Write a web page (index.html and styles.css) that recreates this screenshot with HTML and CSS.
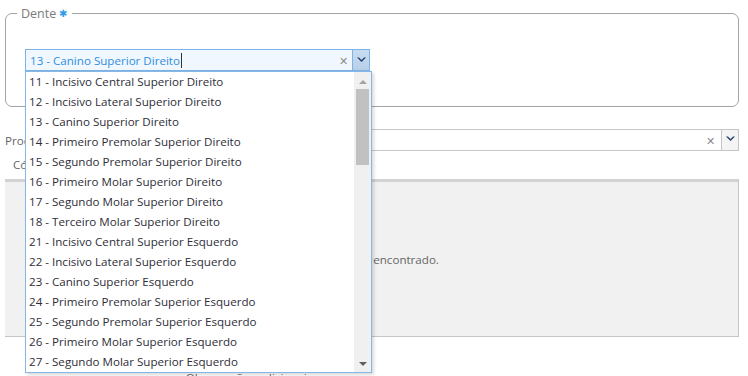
FILE: index.html
```html
<!DOCTYPE html>
<html lang="pt">
<head>
    <meta charset="UTF-8">
    <title>Dente</title>
    <link rel="stylesheet" href="styles.css">
</head>
<body>
    <fieldset class="tooth-box">
        <legend>Dente <span class="req">&#x2731;</span></legend>
        <div class="combo combo-open">
            <div class="combo-input">
                <span class="combo-text">13 - Canino Superior Direito</span><span class="caret"></span>
                <span class="combo-clear">&#x2715;</span>
            </div>
            <div class="combo-btn"><svg width="9" height="6" viewBox="0 0 9 6"><path d="M0 0.5 L4.5 5 L9 0.5 L7 0.5 L4.5 3 L2 0.5 Z" fill="#24406e"/></svg></div>

            <div class="combo-list">
                <ul class="options">
                    <li>11 - Incisivo Central Superior Direito</li>
                    <li>12 - Incisivo Lateral Superior Direito</li>
                    <li>13 - Canino Superior Direito</li>
                    <li>14 - Primeiro Premolar Superior Direito</li>
                    <li>15 - Segundo Premolar Superior Direito</li>
                    <li>16 - Primeiro Molar Superior Direito</li>
                    <li>17 - Segundo Molar Superior Direito</li>
                    <li>18 - Terceiro Molar Superior Direito</li>
                    <li>21 - Incisivo Central Superior Esquerdo</li>
                    <li>22 - Incisivo Lateral Superior Esquerdo</li>
                    <li>23 - Canino Superior Esquerdo</li>
                    <li>24 - Primeiro Premolar Superior Esquerdo</li>
                    <li>25 - Segundo Premolar Superior Esquerdo</li>
                    <li>26 - Primeiro Molar Superior Esquerdo</li>
                    <li>27 - Segundo Molar Superior Esquerdo</li>
                </ul>
                <div class="scrollbar">
                    <span class="sb-up"></span>
                    <span class="sb-thumb"></span>
                    <span class="sb-down"></span>
                </div>
            </div>
        </div>
    </fieldset>

    <div class="proc-row">
        <label class="proc-label">Procedimento</label>
        <div class="combo-plain">
            <span class="combo-clear">&#x2715;</span>
            <div class="plain-btn"><svg width="9" height="6" viewBox="0 0 9 6"><path d="M0 0.5 L4.5 5 L9 0.5 L7 0.5 L4.5 3 L2 0.5 Z" fill="#24406e"/></svg></div>
        </div>
    </div>

    <div class="tabs">
        <span class="tab">Código</span>
    </div>

    <div class="grid-panel">
        <p class="empty">Nenhum registro encontrado.</p>
    </div>

    <p class="footer-note">Observações adicionais</p>
</body>
</html>
```

FILE: styles.css
```css
* {
    box-sizing: border-box;
}

body {
    margin: 0;
    font-family: "Open Sans", "Liberation Sans", sans-serif;
    font-size: 11.6px;
    color: #333;
    background: #fff;
}

.tooth-box {
    margin: 5px 9px 0 5px;
    padding: 27px 20px 0 19px;
    height: 102px;
    border: 1px solid #a3a3a3;
    border-radius: 7px;
}

.tooth-box legend {
    color: #7a7a7a;
    padding: 0 5px 0 4px;
    margin-left: -8px;
    font-size: 12.5px;
}

.req {
    color: #2f9be8;
    font-size: 10px;
    vertical-align: 1px;
}

.combo {
    position: relative;
    display: flex;
    width: 345px;
    height: 22px;
}

.combo-input {
    flex: 1;
    display: flex;
    align-items: center;
    padding-left: 4px;
    background: #f0f7fe;
    border: 1px solid #7db3e8;
    color: #2f8fe0;
    position: relative;
}

.caret {
    display: inline-block;
    width: 1px;
    height: 15px;
    background: #333;
    margin-left: 1px;
}

.combo-clear {
    position: absolute;
    right: 4px;
    top: 3px;
    color: #8c8c8c;
    font-size: 11px;
}

.combo-btn {
    width: 17px;
    display: flex;
    justify-content: center;
    padding-top: 7px;
    background: linear-gradient(#c7dcf0, #b7cfe8);
    border: 1px solid #7db3e8;
    border-left: none;
}

.combo-list {
    position: absolute;
    left: 0;
    top: 22px;
    width: 347px;
    height: 302px;
    background: #fff;
    border: 1px solid #86b7e6;
    box-shadow: 2px 2px 3px rgba(0, 0, 0, 0.15);
    display: flex;
    z-index: 5;
}

.options {
    list-style: none;
    margin: 0;
    padding: 0;
    flex: 1;
}

.options li {
    height: 20px;
    line-height: 20px;
    padding-left: 3px;
    white-space: nowrap;
    color: #2e2e38;
}

.scrollbar {
    width: 17px;
    background: #f0f0f0;
    display: flex;
    flex-direction: column;
    align-items: center;
}

.sb-up,
.sb-down {
    width: 0;
    height: 0;
    border-left: 4px solid transparent;
    border-right: 4px solid transparent;
}

.sb-up {
    margin-top: 8px;
    border-bottom: 4px solid #a3a3a3;
}

.sb-down {
    margin-top: auto;
    margin-bottom: 6px;
    border-top: 4px solid #606060;
}

.sb-thumb {
    width: 13px;
    height: 76px;
    margin-top: 5px;
    background: #c1c1c1;
}

.proc-row {
    display: flex;
    align-items: center;
    margin: 22px 9px 0 5px;
    height: 22px;
}

.proc-label {
    width: 100px;
    color: #666;
}

.combo-plain {
    flex: 1;
    height: 22px;
    border: 1px solid #c5c5c5;
    position: relative;
}

.combo-plain .combo-clear {
    right: 23px;
}

.plain-btn {
    position: absolute;
    right: 0;
    top: 0;
    bottom: 0;
    width: 17px;
    border-left: 1px solid #c5c5c5;
    background: #f4f4f4;
    display: flex;
    justify-content: center;
    padding-top: 6px;
}

.tabs {
    margin: 0 9px 0 5px;
    padding: 6px 0 0 8px;
    height: 28px;
}

.tab {
    color: #666;
}

.grid-panel {
    margin: 0 9px 0 5px;
    height: 158px;
    background: #f1f1f1;
    border-top: 3px solid #d2d2d2;
    border-right: 1px solid #c5c5c5;
    border-bottom: 1px solid #c5c5c5;
    display: flex;
    align-items: center;
    justify-content: center;
}

.empty {
    margin: 0 26px 0 0;
    color: #666;
}

.footer-note {
    margin: 33px 0 0 0;
    text-align: center;
    padding-right: 250px;
    color: #666;
}
```
